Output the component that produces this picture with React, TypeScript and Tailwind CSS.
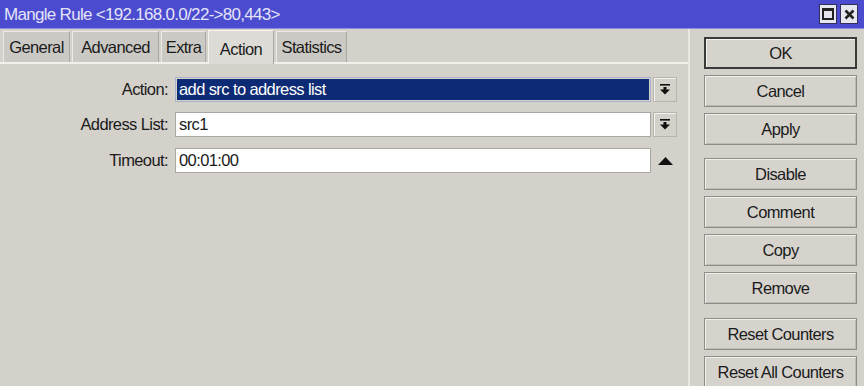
import React from "react";

const font = { fontFamily: '"Liberation Sans", Arial, sans-serif' };

function DropIcon() {
  return (
    <svg width="10" height="11" viewBox="0 0 10 11">
      <rect x="0" y="0" width="10" height="1.6" fill="#111" />
      <rect x="3.5" y="3" width="3" height="3" fill="#111" />
      <polygon points="0,5.5 10,5.5 5,10.5" fill="#111" />
    </svg>
  );
}

function Btn({ label, ok, className = "" }: { label: string; ok?: boolean; className?: string }) {
  return (
    <div
      className={
        "h-[32px] w-[153px] flex items-center justify-center text-[16.5px] tracking-[-0.6px] text-[#1b1b1b] bg-[#d6d3cd] " +
        (ok
          ? "border-2 border-[#3a3a3a] shadow-[inset_1px_1px_0_#f2f1ee]"
          : "border border-[#8e8c88] shadow-[inset_1px_1px_0_#f2f1ee,inset_-1px_-1px_0_#bdbab4]") +
        " " +
        className
      }
    >
      {label}
    </div>
  );
}

const tabs = [
  { name: "General", w: 67 },
  { name: "Advanced", w: 87 },
  { name: "Extra", w: 45 },
  { name: "Action", w: 66, active: true },
  { name: "Statistics", w: 71 },
];

const txt = "text-[16.5px] tracking-[-0.6px] text-[#1b1b1b]";

export default function App() {
  return (
    <div className="w-[864px] h-[386px] overflow-hidden bg-[#d4d0ca] flex flex-col" style={font}>
      {/* Title bar */}
      <div className="h-[29px] shrink-0 bg-[#4b4bcf] border-b border-[#8c8ce0] flex items-center justify-between pl-[4px] pr-[6px]">
        <span className="text-[17px] tracking-[-0.7px] text-[#e4e4f8] leading-none">Mangle Rule &lt;192.168.0.0/22-&gt;80,443&gt;</span>
        <div className="flex gap-[3px]">
          <div className="w-[18px] h-[20px] bg-[#e6e6ee] border border-[#30305a] flex items-center justify-center">
            <div className="w-[12px] h-[12px] border-2 border-t-[3px] border-[#222]" />
          </div>
          <div className="w-[18px] h-[20px] bg-[#e6e6ee] border border-[#30305a] flex items-center justify-center">
            <svg width="11" height="11" viewBox="0 0 11 11">
              <path d="M1.5 1.5 L9.5 9.5 M9.5 1.5 L1.5 9.5" stroke="#222" strokeWidth="2.6" />
            </svg>
          </div>
        </div>
      </div>

      <div className="flex flex-1">
        {/* Left panel */}
        <div className="w-[690px] flex flex-col border-r-2 border-r-[#e9e7e2]">
          <div className="h-[35px] flex items-end gap-[2px] pl-[3px] border-b-2 border-[#f1f0ec]">
            {tabs.map((t) =>
              t.active ? (
                <div
                  key={t.name}
                  style={{ width: t.w }}
                  className={"h-[34px] -mb-[2px] bg-[#dddbd6] border-t border-l border-[#f4f3f0] border-r border-r-[#a9a7a2] flex items-start pt-[6px] justify-center " + txt}
                >
                  {t.name}
                </div>
              ) : (
                <div
                  key={t.name}
                  style={{ width: t.w }}
                  className={"h-[31px] bg-[#cbc9c4] border-t border-l border-[#ebeae6] border-r border-r-[#a9a7a2] flex items-center justify-center " + txt}
                >
                  {t.name}
                </div>
              )
            )}
          </div>

          <div className="flex flex-col pt-[13px]">
            {/* Action */}
            <div className="flex items-center h-[25px]">
              <div className={"w-[168px] text-right " + txt}>Action:</div>
              <div className="ml-[7px] w-[476px] h-[25px] border border-[#a9b0cc] p-[1px]">
                <div className="h-full bg-[#0d2a74] text-white text-[16.5px] tracking-[-0.6px] flex items-center pl-[2px]">add src to address list</div>
              </div>
              <div className="ml-[2px] w-[24px] h-[25px] border border-[#b6b4ae] shadow-[inset_1px_1px_0_#f4f3f0] flex items-center justify-center">
                <DropIcon />
              </div>
            </div>
            {/* Address List */}
            <div className="flex items-center h-[25px] mt-[10px]">
              <div className={"w-[168px] text-right " + txt}>Address List:</div>
              <div className={"ml-[7px] w-[476px] h-[25px] border border-[#a9a7a1] bg-white flex items-center pl-[3px] " + txt}>
                src1
              </div>
              <div className="ml-[2px] w-[24px] h-[25px] border border-[#b6b4ae] shadow-[inset_1px_1px_0_#f4f3f0] flex items-center justify-center">
                <DropIcon />
              </div>
            </div>
            {/* Timeout */}
            <div className="flex items-center h-[25px] mt-[11px]">
              <div className={"w-[168px] text-right " + txt}>Timeout:</div>
              <div className={"ml-[7px] w-[476px] h-[25px] border border-[#a9a7a1] bg-white flex items-center pl-[3px] " + txt}>
                00:01:00
              </div>
              <div className="ml-[2px] w-[24px] h-[25px] flex items-center justify-center">
                <svg width="15" height="8" viewBox="0 0 15 8">
                  <polygon points="0,8 15,8 7.5,0" fill="#111" />
                </svg>
              </div>
            </div>
          </div>
        </div>

        {/* Right buttons */}
        <div className="flex flex-col pl-[14px] pt-[8px] gap-[6px]">
          <Btn label="OK" ok />
          <Btn label="Cancel" />
          <Btn label="Apply" />
          <Btn label="Disable" className="mt-[7px]" />
          <Btn label="Comment" />
          <Btn label="Copy" />
          <Btn label="Remove" />
          <Btn label="Reset Counters" className="mt-[8px]" />
          <Btn label="Reset All Counters" />
        </div>
      </div>
    </div>
  );
}
